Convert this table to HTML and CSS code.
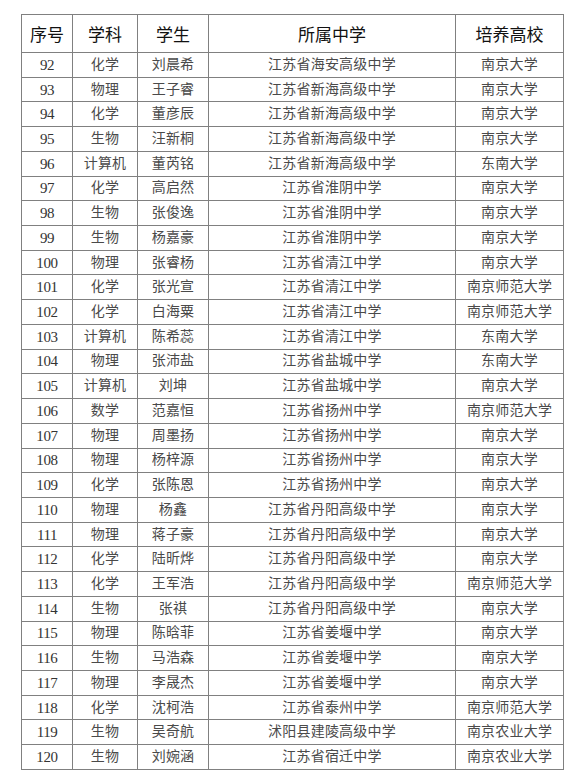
FILE: index.html
```html
<!DOCTYPE html>
<html lang="zh-CN">
<head>
<meta charset="utf-8">
<title>名单</title>
<link rel="stylesheet" href="styles.css">
</head>
<body>
<div class="page">
<table class="roster">
<colgroup>
<col class="c-no"><col class="c-subj"><col class="c-name"><col class="c-school"><col class="c-univ">
</colgroup>
<thead>
<tr><th>序号</th><th>学科</th><th>学生</th><th>所属中学</th><th>培养高校</th></tr>
</thead>
<tbody>
<tr><td class="num">92</td><td>化学</td><td>刘晨希</td><td>江苏省海安高级中学</td><td>南京大学</td></tr>
<tr><td class="num">93</td><td>物理</td><td>王子睿</td><td>江苏省新海高级中学</td><td>南京大学</td></tr>
<tr><td class="num">94</td><td>化学</td><td>董彦辰</td><td>江苏省新海高级中学</td><td>南京大学</td></tr>
<tr><td class="num">95</td><td>生物</td><td>汪新桐</td><td>江苏省新海高级中学</td><td>南京大学</td></tr>
<tr><td class="num">96</td><td>计算机</td><td>董芮铭</td><td>江苏省新海高级中学</td><td>东南大学</td></tr>
<tr><td class="num">97</td><td>化学</td><td>高启然</td><td>江苏省淮阴中学</td><td>南京大学</td></tr>
<tr><td class="num">98</td><td>生物</td><td>张俊逸</td><td>江苏省淮阴中学</td><td>南京大学</td></tr>
<tr><td class="num">99</td><td>生物</td><td>杨嘉豪</td><td>江苏省淮阴中学</td><td>南京大学</td></tr>
<tr><td class="num">100</td><td>物理</td><td>张睿杨</td><td>江苏省清江中学</td><td>南京大学</td></tr>
<tr><td class="num">101</td><td>化学</td><td>张光宣</td><td>江苏省清江中学</td><td>南京师范大学</td></tr>
<tr><td class="num">102</td><td>化学</td><td>白海粟</td><td>江苏省清江中学</td><td>南京师范大学</td></tr>
<tr><td class="num">103</td><td>计算机</td><td>陈希蕊</td><td>江苏省清江中学</td><td>东南大学</td></tr>
<tr><td class="num">104</td><td>物理</td><td>张沛盐</td><td>江苏省盐城中学</td><td>东南大学</td></tr>
<tr><td class="num">105</td><td>计算机</td><td>刘坤</td><td>江苏省盐城中学</td><td>南京大学</td></tr>
<tr><td class="num">106</td><td>数学</td><td>范嘉恒</td><td>江苏省扬州中学</td><td>南京师范大学</td></tr>
<tr><td class="num">107</td><td>物理</td><td>周墨扬</td><td>江苏省扬州中学</td><td>南京大学</td></tr>
<tr><td class="num">108</td><td>物理</td><td>杨梓源</td><td>江苏省扬州中学</td><td>南京大学</td></tr>
<tr><td class="num">109</td><td>化学</td><td>张陈恩</td><td>江苏省扬州中学</td><td>南京大学</td></tr>
<tr><td class="num">110</td><td>物理</td><td>杨鑫</td><td>江苏省丹阳高级中学</td><td>南京大学</td></tr>
<tr><td class="num">111</td><td>物理</td><td>蒋子豪</td><td>江苏省丹阳高级中学</td><td>南京大学</td></tr>
<tr><td class="num">112</td><td>化学</td><td>陆昕烨</td><td>江苏省丹阳高级中学</td><td>南京大学</td></tr>
<tr><td class="num">113</td><td>化学</td><td>王军浩</td><td>江苏省丹阳高级中学</td><td>南京师范大学</td></tr>
<tr><td class="num">114</td><td>生物</td><td>张祺</td><td>江苏省丹阳高级中学</td><td>南京大学</td></tr>
<tr><td class="num">115</td><td>物理</td><td>陈晗菲</td><td>江苏省姜堰中学</td><td>南京大学</td></tr>
<tr><td class="num">116</td><td>生物</td><td>马浩森</td><td>江苏省姜堰中学</td><td>南京大学</td></tr>
<tr><td class="num">117</td><td>物理</td><td>李晟杰</td><td>江苏省姜堰中学</td><td>南京大学</td></tr>
<tr><td class="num">118</td><td>化学</td><td>沈柯浩</td><td>江苏省泰州中学</td><td>南京师范大学</td></tr>
<tr><td class="num">119</td><td>生物</td><td>吴奇航</td><td>沭阳县建陵高级中学</td><td>南京农业大学</td></tr>
<tr><td class="num">120</td><td>生物</td><td>刘婉涵</td><td>江苏省宿迁中学</td><td>南京农业大学</td></tr>
</tbody>
</table>
</div>
</body>
</html>
```
FILE: styles.css
```css
html, body {
  margin: 0;
  padding: 0;
  background: #ffffff;
}
.page {
  padding: 14px 0 0 21px;
}
.roster {
  border-collapse: collapse;
  table-layout: fixed;
  width: 542px;
  font-family: "Liberation Serif", "Noto Sans CJK SC", serif;
  color: #4a4a4a;
}
.c-no { width: 51px; }
.c-subj { width: 65px; }
.c-name { width: 71px; }
.c-school { width: 247px; }
.c-univ { width: 108px; }
.roster th,
.roster td {
  border: 1px solid #808080;
  text-align: center;
  padding: 0;
  white-space: nowrap;
  overflow: hidden;
}
.roster th {
  height: 37px;
  font-family: "Noto Sans CJK SC", sans-serif;
  font-weight: 400;
  font-size: 17px;
  color: #111111;
}
.roster td {
  height: 23.72px;
  font-size: 14px;
  line-height: 16px;
  font-weight: 400;
  letter-spacing: 0.2px;
}
.roster td.num {
  font-size: 15px;
  letter-spacing: -0.4px;
  color: #333333;
}
```
